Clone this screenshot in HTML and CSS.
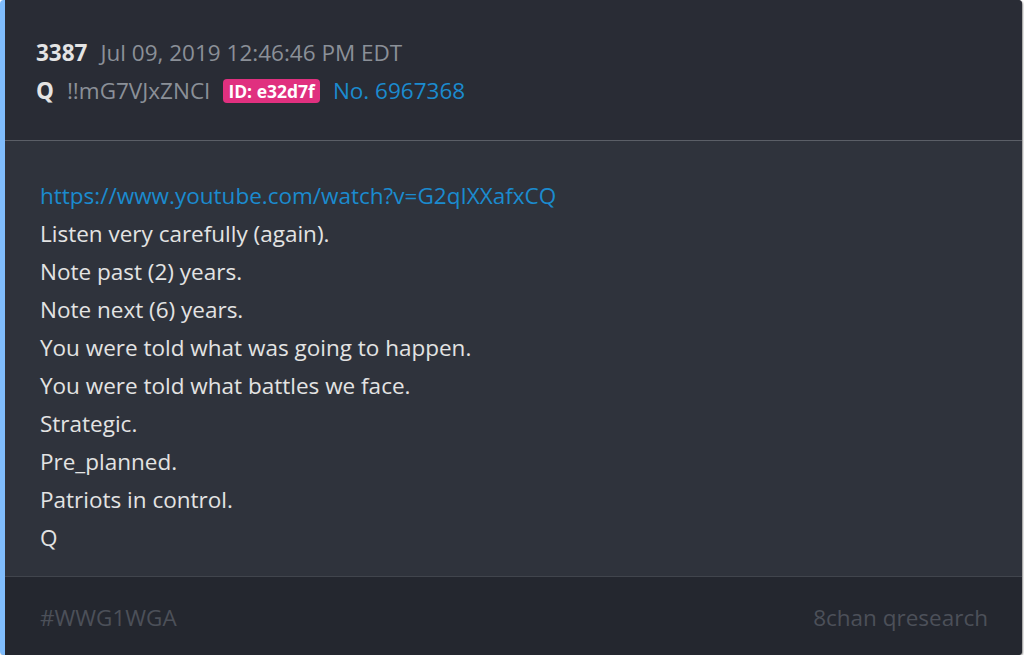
FILE: index.html
```html
<!DOCTYPE html>
<html>
<head>
<meta charset="utf-8">
<link rel="stylesheet" href="styles.css">
</head>
<body>
<div class="card">
  <div class="card-header">
    <div class="meta-row">
      <span class="post-num">3387</span>
      <span class="post-date">Jul 09, 2019 12:46:46 PM EDT</span>
    </div>
    <div class="meta-row">
      <span class="author">Q</span>
      <span class="trip">!!mG7VJxZNCI</span>
      <span class="id-badge">ID: e32d7f</span>
      <a class="post-link">No. 6967368</a>
    </div>
  </div>
  <div class="card-body">
    <a class="body-link">https://www.youtube.com/watch?v=G2qIXXafxCQ</a>
    <p class="line">Listen very carefully (again).</p>
    <p class="line">Note past (2) years.</p>
    <p class="line">Note next (6) years.</p>
    <p class="line">You were told what was going to happen.</p>
    <p class="line">You were told what battles we face.</p>
    <p class="line">Strategic.</p>
    <p class="line">Pre_planned.</p>
    <p class="line">Patriots in control.</p>
    <p class="line">Q</p>
  </div>
  <div class="card-footer">
    <span class="tag">#WWG1WGA</span>
    <span class="source">8chan qresearch</span>
  </div>
</div>
</body>
</html>
```
FILE: styles.css
```css
html, body {
  margin: 0;
  padding: 0;
  background: #ffffff;
}
body {
  font-family: "Open Sans", "Noto Sans", sans-serif;
  font-size: 22.5px;
}
.card {
  width: 1017px;
  height: 655px;
  display: flex;
  flex-direction: column;
  border-left: 5px solid #80bdfd;
  border-radius: 4px;
  overflow: hidden;
  background: #2f333c;
  box-shadow: 1px 1px 2px rgba(0, 0, 0, 0.45);
}
.card-header {
  background: #292c35;
  padding: 34px 30px 30px 31px;
  border-bottom: 1px solid #5b5f67;
  line-height: 38px;
}
.meta-row {
  display: flex;
  align-items: center;
  gap: 13px;
  height: 38px;
}
.post-num, .author {
  font-weight: 700;
  color: #e4e4e4;
}
.post-date, .trip {
  color: #8b9098;
}
.id-badge {
  background: #e0307f;
  color: #ffffff;
  font-weight: 700;
  font-size: 17.5px;
  line-height: 24px;
  padding: 0 5px;
  border-radius: 4px;
}
.post-link {
  color: #1b8bcf;
}
.card-body {
  flex: 1;
  background: #2f333c;
  padding: 36px 30px 0 35px;
  line-height: 38px;
  color: #e3e3e3;
}
.body-link {
  display: block;
  color: #1b8bcf;
}
.line {
  margin: 0;
}
.card-footer {
  background: #24272f;
  border-top: 1px solid #41454d;
  height: 79px;
  box-sizing: border-box;
  padding: 22px 34px 0 35px;
  display: flex;
  justify-content: space-between;
  line-height: 38px;
  color: #4c5059;
}
```
